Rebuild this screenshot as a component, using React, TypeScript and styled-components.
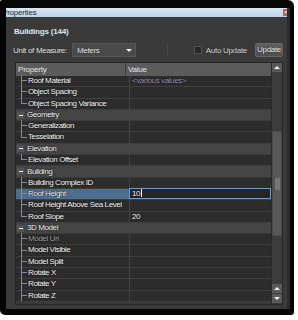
import * as React from "react";
import styled, { createGlobalStyle, css } from "styled-components";

const GlobalStyle = createGlobalStyle`
    body {
        margin: 0;
        background: #ffffff;
        font-family: "Liberation Sans", Arial, sans-serif;
    }
`;

const Frame = styled.div`
    width: 294px;
    height: 315px;
    box-sizing: border-box;
    padding: 8px 4px 6px 6px;
    background: #050505;
    border-radius: 2px 6px 3px 5px;
`;

const Window = styled.div`
    display: flex;
    flex-direction: column;
    height: 301px;
    background: #3a3a3a;
    border-right: 3px solid #2c2c2c;
`;

const TitleBar = styled.div`
    display: flex;
    align-items: center;
    justify-content: space-between;
    height: 9px;
    overflow: hidden;
    background: linear-gradient(#d8e6f4, #bcd2ea);
`;

const Title = styled.span`
    font-size: 8px;
    line-height: 9px;
    color: #2a2a2a;
    text-indent: -4px;
    letter-spacing: -0.2px;
`;

const CloseBox = styled.span`
    width: 6px;
    height: 7px;
    margin-right: -2px;
    background: #c25a55;
    color: #fff;
    font-size: 6px;
    line-height: 7px;
    text-align: center;
`;

const Body = styled.div`
    display: flex;
    flex-direction: column;
    flex: 1;
    padding: 0 4px 0 8px;
`;

const Heading = styled.div`
    margin-top: 10px;
    font-size: 8px;
    line-height: 10px;
    font-weight: bold;
    letter-spacing: -0.2px;
    color: #dce8f6;
`;

const Toolbar = styled.div`
    display: flex;
    align-items: center;
    height: 14px;
    margin-top: 6px;
    font-size: 8px;
    letter-spacing: -0.3px;
    color: #ececec;
    text-shadow: 0 0 1px #000;
`;

const Label = styled.span`
    margin-left: -1px;
`;

const Select = styled.div`
    display: flex;
    align-items: center;
    justify-content: space-between;
    width: 64px;
    height: 14px;
    box-sizing: border-box;
    margin-left: 5px;
    padding-left: 4px;
    background: #4a4a4a;
    border: 1px solid #555;
`;

const SelectArrow = styled.span`
    width: 0;
    height: 0;
    margin-right: 3px;
    border-left: 3px solid transparent;
    border-right: 3px solid transparent;
    border-top: 3px solid #e8e8e8;
`;

const Divider = styled.span`
    width: 1px;
    height: 14px;
    margin-left: 31px;
    background: #474747;
`;

const Spacer = styled.span`
    flex: 1;
`;

const Check = styled.span`
    width: 6px;
    height: 6px;
    background: #262626;
    border: 1px solid #505050;
`;

const CheckLabel = styled.span`
    margin-left: 4px;
    color: #dcdcdc;
`;

const Button = styled.div`
    width: 28px;
    height: 14px;
    box-sizing: border-box;
    margin-left: 8px;
    background: linear-gradient(#5e5e5e, #4e4e4e);
    border: 1px solid #666;
    border-radius: 2px;
    text-align: center;
    line-height: 12px;
    color: #f0f0f0;
`;

const Grid = styled.div`
    display: flex;
    height: 241px;
    margin: 5px 0 0 1px;
    border: 1px solid #262626;
    overflow: hidden;
    font-size: 8px;
    letter-spacing: -0.4px;
`;

const Table = styled.div`
    flex: 1;
    overflow: hidden;
`;

const HeaderRow = styled.div`
    display: flex;
    height: 13px;
    background: #5b5b5b;
    color: #e4e4e4;
    line-height: 13px;
    letter-spacing: -0.2px;
`;

const HeaderCell = styled.div<{ $first?: boolean }>`
    padding-left: 2px;
    ${(p) => p.$first && css`
        width: 107px;
        border-right: 1px solid #3c3c3c;
    `}
`;

const Row = styled.div<{ $category?: boolean }>`
    display: flex;
    height: 11.3px;
    box-sizing: border-box;
    line-height: 10px;
    background: ${(p) => (p.$category ? "#444444" : "#2c2c2c")};
    border-bottom: 1px solid ${(p) => (p.$category ? "#3a3a3a" : "#3e3e3e")};
    color: #ffffff;
    text-shadow: 0 0 1px #000, 0 0 1px #000;
`;

const NameCell = styled.div<{ $selected?: boolean; $disabled?: boolean }>`
    display: flex;
    align-items: stretch;
    width: 108px;
    padding-left: 5px;
    border-right: 1px solid #444;
    white-space: nowrap;
    background: ${(p) => (p.$selected ? "#4d6d8f" : "transparent")};
    color: ${(p) => (p.$disabled ? "#a8a8a8" : "inherit")};
`;

const TreeLine = styled.span<{ $last?: boolean }>`
    flex: none;
    width: 7px;
    margin-top: -1px;
    background:
        linear-gradient(#8a8a8a, #8a8a8a) left top / 1px ${(p) => (p.$last ? "50%" : "100%")} no-repeat,
        linear-gradient(#8a8a8a, #8a8a8a) left center / 6px 1px no-repeat;
`;

const ValueCell = styled.div<{ $tone?: "muted" | "edit" }>`
    flex: 1;
    padding-left: 2px;
    white-space: nowrap;
    color: ${(p) => (p.$tone === "muted" ? "#a49cb8" : "#ffffff")};
    ${(p) => p.$tone === "edit" && css`
        background: #252525;
        border: 1px solid #6d9bc8;
        margin: -1px 0 0 -1px;
    `}
`;

const Caret = styled.span`
    display: inline-block;
    width: 1px;
    height: 8px;
    margin-left: 1px;
    vertical-align: -1px;
    background: #fff;
`;

const CatCell = styled.div`
    display: flex;
    align-items: center;
    padding-left: 1px;
`;

const Toggle = styled.span`
    width: 7px;
    height: 7px;
    margin-right: 3px;
    background:
        linear-gradient(#f0f0f0, #f0f0f0) center / 4px 1px no-repeat,
        #535353;
`;

const Scrollbar = styled.div`
    display: flex;
    flex-direction: column;
    width: 10px;
    background: #3b3b3b;
    border-left: 1px solid #2a2a2a;
`;

const ScrollButton = styled.div<{ $down?: boolean }>`
    display: flex;
    align-items: center;
    justify-content: center;
    height: 9px;
    margin-bottom: 1px;
    background: #5a5a5a;
    &::after {
        content: "";
        border-left: 3px solid transparent;
        border-right: 3px solid transparent;
        ${(p) => (p.$down ? "border-top: 3px solid #f0f0f0;" : "border-bottom: 3px solid #f0f0f0;")}
    }
`;

const Track = styled.div`
    flex: 1;
    display: flex;
    flex-direction: column;
`;

const Thumb = styled.div`
    display: flex;
    align-items: center;
    justify-content: center;
    height: 103px;
    margin-top: 58px;
    background: #575757;
    border: 1px solid #4a4a4a;
`;

const Grip = styled.span`
    width: 5px;
    height: 12px;
    background: radial-gradient(#9a9a9a 0.6px, transparent 0.8px) 0 0 / 2px 2px;
`;

type Item =
    | { kind: "cat"; name: string }
    | {
          kind: "prop";
          name: string;
          value?: string;
          tone?: "muted" | "edit";
          last?: boolean;
          selected?: boolean;
          disabled?: boolean;
      };

const items: Item[] = [
    { kind: "prop", name: "Roof Material", value: "<various values>", tone: "muted" },
    { kind: "prop", name: "Object Spacing" },
    { kind: "prop", name: "Object Spacing Variance", last: true },
    { kind: "cat", name: "Geometry" },
    { kind: "prop", name: "Generalization" },
    { kind: "prop", name: "Tesselation", last: true },
    { kind: "cat", name: "Elevation" },
    { kind: "prop", name: "Elevation Offset", last: true },
    { kind: "cat", name: "Building" },
    { kind: "prop", name: "Building Complex ID" },
    { kind: "prop", name: "Roof Height", value: "10", tone: "edit", selected: true },
    { kind: "prop", name: "Roof Height Above Sea Level" },
    { kind: "prop", name: "Roof Slope", value: "20", last: true },
    { kind: "cat", name: "3D Model" },
    { kind: "prop", name: "Model Uri", disabled: true },
    { kind: "prop", name: "Model Visible" },
    { kind: "prop", name: "Model Split" },
    { kind: "prop", name: "Rotate X" },
    { kind: "prop", name: "Rotate Y" },
    { kind: "prop", name: "Rotate Z" },
];

function GridRow({ item }: { item: Item }) {
    if (item.kind === "cat") {
        return (
            <Row $category>
                <CatCell>
                    <Toggle />
                    {item.name}
                </CatCell>
            </Row>
        );
    }
    return (
        <Row>
            <NameCell $selected={item.selected} $disabled={item.disabled}>
                <TreeLine $last={item.last} />
                {item.name}
            </NameCell>
            <ValueCell $tone={item.tone}>
                {item.value}
                {item.tone === "edit" && <Caret />}
            </ValueCell>
        </Row>
    );
}

export default function App() {
    return (
        <>
            <GlobalStyle />
            <Frame>
                <Window>
                    <TitleBar>
                        <Title>Properties</Title>
                        <CloseBox>×</CloseBox>
                    </TitleBar>
                    <Body>
                        <Heading>Buildings (144)</Heading>
                        <Toolbar>
                            <Label>Unit of Measure:</Label>
                            <Select>
                                Meters
                                <SelectArrow />
                            </Select>
                            <Divider />
                            <Spacer />
                            <Check />
                            <CheckLabel>Auto Update</CheckLabel>
                            <Button>Update</Button>
                        </Toolbar>
                        <Grid>
                            <Table>
                                <HeaderRow>
                                    <HeaderCell $first>Property</HeaderCell>
                                    <HeaderCell>Value</HeaderCell>
                                </HeaderRow>
                                {items.map((item, i) => (
                                    <GridRow key={i} item={item} />
                                ))}
                            </Table>
                            <Scrollbar>
                                <ScrollButton />
                                <Track>
                                    <Thumb>
                                        <Grip />
                                    </Thumb>
                                </Track>
                                <ScrollButton />
                                <ScrollButton $down />
                            </Scrollbar>
                        </Grid>
                    </Body>
                </Window>
            </Frame>
        </>
    );
}
